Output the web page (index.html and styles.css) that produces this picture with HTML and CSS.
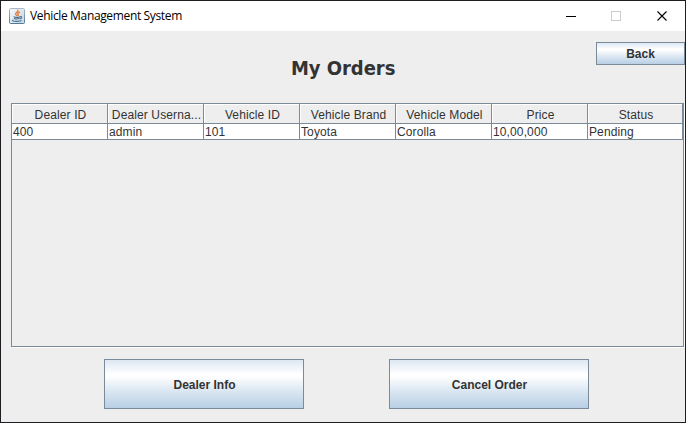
FILE: index.html
```html
<!DOCTYPE html>
<html lang="en">
<head>
<meta charset="utf-8">
<title>Vehicle Management System</title>
<link rel="stylesheet" href="styles.css">
</head>
<body>
<div class="window">
  <header class="titlebar">
    <svg class="app-icon" width="16" height="16" viewBox="0 0 16 16">
      <defs><linearGradient id="tile" x1="0" y1="0" x2="0" y2="1"><stop offset="0" stop-color="#a9b9c7"/><stop offset="1" stop-color="#557894"/></linearGradient>
      <linearGradient id="face" x1="0" y1="0" x2="1" y2="1"><stop offset="0" stop-color="#f7f9fa"/><stop offset="1" stop-color="#c5d4e0"/></linearGradient></defs>
      <rect x=".5" y=".5" width="15" height="15" rx="1" fill="url(#face)" stroke="url(#tile)"/>
      <g fill="none" stroke-linecap="round">
        <path d="M8.900 2.200c.8 1.700-3.100 2.600-2.200 4.200.2.600.9.900 1.100 1.500M10.700 4.200c-2 .8-2.600 1.600-1.600 2.500.4.500.1.900-.3 1.200" stroke="#e8772e" stroke-width="1.300"/>
        <path d="M5 8.800c1 .6 4 .6 5.500.1M5.400 10.500c1.200.6 3.300.6 4.700.1M4 12.200c-1.400.6 1 1.200 3.900 1.200 2.400 0 4.300-.5 4-1M11.200 8.700c2-.5 2 1.500 0 2" stroke="#426f94" stroke-width="1.100"/>
      </g>
    </svg>
    <span class="caption">Vehicle Management System</span>
    <svg class="controls" width="104" height="12" viewBox="0 0 104 12" shape-rendering="crispEdges">
      <path d="M0 6.500h10" stroke="#000"/>
      <rect x="45.500" y="1.500" width="9" height="9" fill="none" stroke="#ccc"/>
      <path d="M91.500 1.500l9 9M100.500 1.500l-9 9" stroke="#000" stroke-width="1.100" shape-rendering="auto"/>
    </svg>
  </header>
  <main class="content">
    <div class="heading">
      <h1>My Orders</h1>
      <button class="btn back">Back</button>
    </div>
    <div class="scroll-pane">
      <table>
        <thead><tr><th>Dealer ID</th><th>Dealer Userna...</th><th>Vehicle ID</th><th>Vehicle Brand</th><th>Vehicle Model</th><th>Price</th><th>Status</th></tr></thead>
        <tbody><tr><td>400</td><td>admin</td><td>101</td><td>Toyota</td><td>Corolla</td><td>10,00,000</td><td>Pending</td></tr></tbody>
      </table>
    </div>
    <div class="actions">
      <button class="btn">Dealer Info</button>
      <button class="btn">Cancel Order</button>
    </div>
  </main>
</div>
</body>
</html>
```

FILE: styles.css
```css
* { box-sizing: border-box; }
body { margin: 0; font: 12px "Liberation Sans", Arial, sans-serif; color: #333; }
.window {
  width: 686px;
  height: 423px;
  border: 1px solid #1f1d22;
  background: #eee;
  display: flex;
  flex-direction: column;
  overflow: hidden;
}
.titlebar {
  height: 30px;
  flex: none;
  background: #fff;
  display: flex;
  align-items: center;
  padding: 0 15px 0 8px;
}
.app-icon { margin-right: 5px; flex: none; }
.caption {
  font: 12px/16px "Open Sans", "Noto Sans", sans-serif;
  color: #000;
  white-space: nowrap;
  letter-spacing: -0.35px;
}
.controls { margin-left: auto; flex: none; }
.content { flex: 1; display: flex; flex-direction: column; }
.heading {
  height: 72px;
  display: grid;
  grid-template-columns: 595px 89px;
  align-items: start;
  padding-top: 11px;
}
h1 {
  margin: 13px 0 0;
  padding-left: 290px;
  font: bold 20px/26px "DejaVu Sans Condensed", "DejaVu Sans", sans-serif;
  font-stretch: condensed;
  letter-spacing: -0.05px;
  white-space: nowrap;
}
.btn {
  width: 200px;
  height: 50px;
  padding: 2px 0 0 1px;
  border: 1px solid #7a8a99;
  border-radius: 0;
  background: linear-gradient(#dde8f3 0%, #fff 30%, #fff 34%, #dbe7f2 64%, #b8cfe5 100%);
  color: #333;
  font: bold 12px "Liberation Sans", Arial, sans-serif;
}
.back { width: 89px; height: 23px; padding: 0; }
.scroll-pane {
  width: 673px;
  height: 244px;
  margin-left: 10px;
  border: 1px solid #7a8a99;
  box-shadow: 1px 1px 0 #fff;
}
table { width: 671px; table-layout: fixed; border-collapse: separate; border-spacing: 0; }
th, td {
  width: 96px;
  padding: 0;
  border-right: 1px solid #7a8a99;
  border-bottom: 1px solid #7a8a99;
  white-space: nowrap;
  overflow: hidden;
  letter-spacing: 0.12px;
}
th:last-child, td:last-child { width: 95px; }
th {
  height: 20px;
  padding: 3px 0 0 2px;
  font-weight: normal;
  line-height: 16px;
  text-align: center;
  box-shadow: inset 1px 1px 0 #fff;
}
td { height: 16px; padding: 1px 0 0 1px; line-height: 14px; background: #fff; }
.actions { display: flex; gap: 85px; padding: 12px 0 0 103px; }
```
